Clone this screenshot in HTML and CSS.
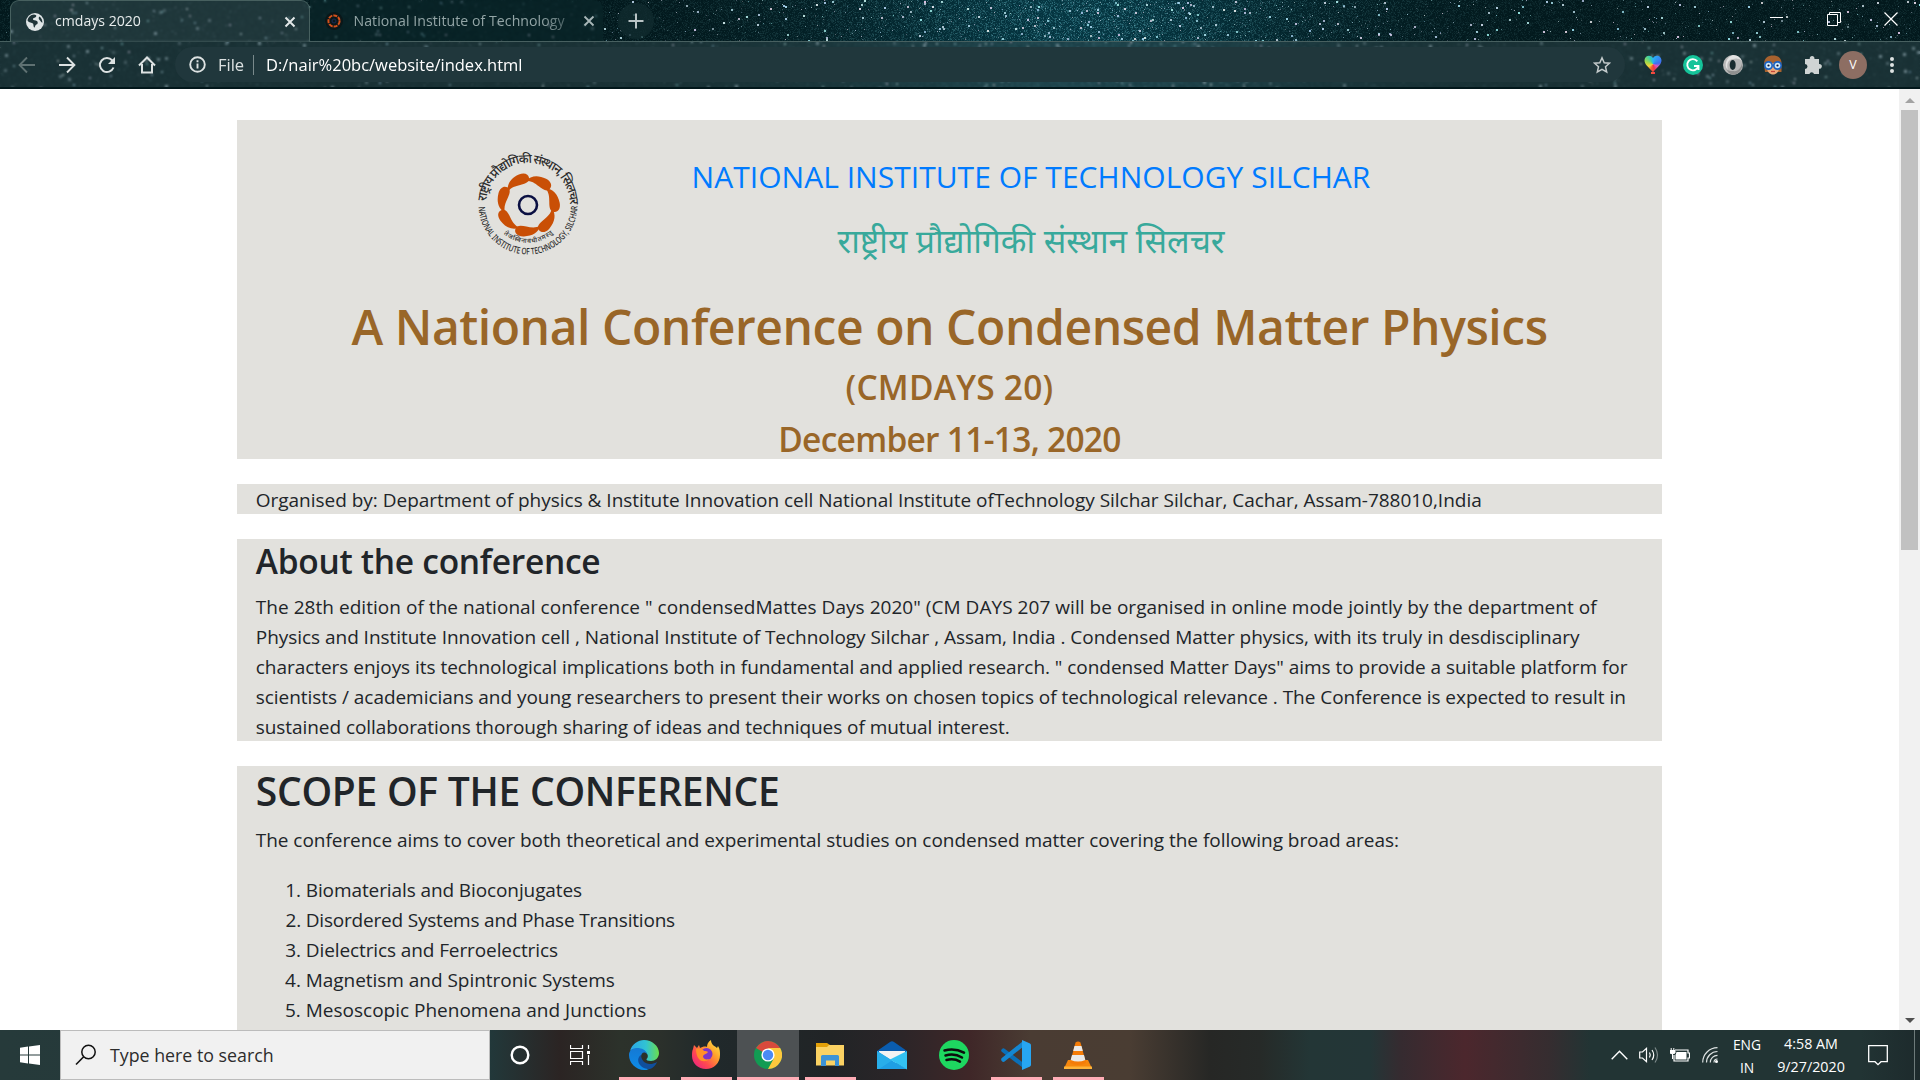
FILE: index.html
```html
<!DOCTYPE html>
<html lang="en">
<head>
<meta charset="utf-8">
<title>cmdays 2020</title>
<link rel="stylesheet" href="styles.css">
</head>
<body>
<header class="chrome">
  <canvas class="sky" width="1920" height="89"></canvas>
  <div class="tabstrip">
    <div class="tab tab-active">
      <svg class="globe" width="20" height="20" viewBox="0 0 20 20"><circle cx="10" cy="10" r="9" fill="#dfe5e6"/><path d="M9 2.500c3 .2 2.600 2 1.500 2.800-1.200.7-2.700.6-2.500 2.200.2 1.200 3.400.4 4.400 1.900.8 1.300.1 2.800-1 3.200-1.300.5-.9 2-2.200 3.200-.9-1-.5-3.200-1.200-4.200C6.900 10.500 4 10.800 2.600 8.800 2.600 5.600 5.500 2.700 9 2.500zM14.500 4.500c2 1.500 3 3.800 2.900 6.200-1.500-.2-1.800-1.800-2.800-2.600-1-1-1.300-2.700-.1-3.600z" fill="#1f3438"/></svg>
      <span class="tab-title">cmdays 2020</span>
      <svg class="close" width="12" height="12" viewBox="0 0 12 12"><path d="M1.500 1.500l9 9m0-9l-9 9" stroke="#e3e8e8" stroke-width="2"/></svg>
    </div>
    <div class="tab tab-idle">
      <svg class="globe" width="20" height="20" viewBox="0 0 20 20"><circle cx="10" cy="10" r="9" fill="#0b1719"/><circle cx="10" cy="10" r="5.600" fill="none" stroke="#d4511b" stroke-width="2" stroke-dasharray="4 1"/><circle cx="10" cy="10" r="2" fill="none" stroke="#172a55"/></svg>
      <span class="tab-title tab-title-idle">National Institute of Technology</span>
      <svg class="close" width="12" height="12" viewBox="0 0 12 12"><path d="M1.500 1.500l9 9m0-9l-9 9" stroke="#a9b7b8" stroke-width="1.800"/></svg>
    </div>
    <div class="new-tab"><svg width="16" height="16" viewBox="0 0 16 16"><path d="M8 .5v15M.5 8h15" stroke="#b9c4c5" stroke-width="2"/></svg></div>
    <div class="window-buttons">
      <svg width="14" height="14" viewBox="0 0 14 14"><path d="M0 5.500h13" stroke="#fff"/></svg>
      <svg width="14" height="14" viewBox="0 0 14 14"><path d="M.5 2.500h10v11H.5zM2.500 2.500v-2h11v10h-3" fill="none" stroke="#fff"/></svg>
      <svg width="14" height="14" viewBox="0 0 14 14"><path d="M.5.5l13 13m0-13l-13 13" stroke="#fff" stroke-width="1.200"/></svg>
    </div>
  </div>
  <div class="toolbar">
    <div class="nav-icons">
      <svg width="18" height="18" viewBox="0 0 18 18"><path d="M17 9H2M9 1.500L1.600 9 9 16.500" fill="none" stroke="#5f7172" stroke-width="1.900"/></svg>
      <svg width="18" height="18" viewBox="0 0 18 18"><path d="M1 9h15M9 1.500L16.400 9 9 16.500" fill="none" stroke="#dde2e2" stroke-width="1.900"/></svg>
      <svg width="18" height="18" viewBox="0 0 18 18"><path d="M15.500 11.500A7 7 0 1 1 14.300 4.500" fill="none" stroke="#dde2e2" stroke-width="2"/><path d="M17 1v7h-7z" fill="#dde2e2"/></svg>
      <svg width="18" height="18" viewBox="0 0 18 18"><path d="M1 9.500L9 1.500l8 8M4 8v8.500h10V8" fill="none" stroke="#dde2e2" stroke-width="2"/></svg>
    </div>
    <div class="omnibox">
      <svg width="17" height="17" viewBox="0 0 17 17"><circle cx="8.500" cy="8.500" r="7.300" fill="none" stroke="#dde2e2" stroke-width="1.900"/><path d="M8.500 7.500v5M8.500 4.300v1.900" stroke="#dde2e2" stroke-width="1.900"/></svg>
      <span class="scheme">File</span>
      <i class="rule"></i>
      <span class="url">D:/nair%20bc/website/index.html</span>
      <svg class="star" width="18" height="18" viewBox="0 0 18 18"><path d="M9 1.800l2.200 4.900 5.300.5-4 3.600 1.200 5.200L9 13.300 4.300 16l1.200-5.200-4-3.600 5.300-.5z" fill="none" stroke="#c4cbcc" stroke-width="1.500"/></svg>
    </div>
    <div class="extensions">
      <div class="heart"></div>
      <svg width="20" height="20" viewBox="0 0 20 20"><circle cx="10" cy="10" r="10" fill="#15c39a"/><path d="M14.300 6.300A5.600 5.600 0 1 0 15.300 11H11M15.500 15v-4" fill="none" stroke="#fff" stroke-width="1.900"/></svg>
      <svg width="20" height="20" viewBox="0 0 20 20"><circle cx="10" cy="10" r="10" fill="#b9b9b9"/><path d="M10 0a10 10 0 0 1 9 6c-3-3-6-3-9-2C5 5 3 9 5 16A10 10 0 0 1 10 0z" fill="#e3e3e3"/><path d="M10 20a10 10 0 0 0 9-12c-1 5-4 9-9 8-3 0-5 0-7-3a10 10 0 0 0 7 7z" fill="#8f9090"/><ellipse cx="9.700" cy="10" rx="3" ry="5" fill="#1a2d30"/></svg>
      <svg width="20" height="20" viewBox="0 0 20 20"><path d="M1 9C1 3 5 .5 10 .5S19 3 18.500 9v8H2z" fill="#a8622f"/><path d="M4 8h12v5c0 4-3 6.500-6 6.500S4 17 4 13z" fill="#eba878"/><circle cx="5.500" cy="10.500" r="4.500" fill="#1a63c4"/><circle cx="14.500" cy="10.500" r="4.500" fill="#1a63c4"/><circle cx="5.500" cy="10.500" r="2.800" fill="#cfe8f8"/><circle cx="14.500" cy="10.500" r="2.800" fill="#cfe8f8"/><circle cx="5.500" cy="10.500" r="1.100" fill="#113"/><circle cx="14.500" cy="10.500" r="1.100" fill="#113"/><path d="M8 16.500h4" stroke="#c1443a" stroke-width="1.200"/></svg>
      <svg width="20" height="20" viewBox="0 0 20 20"><path d="M2 4h4.800a2.400 2.400 0 1 1 4.600 0H16v5a2.400 2.400 0 1 1 0 4.700V19h-5a2.400 2.400 0 0 0-4.600 0H2v-5a2.500 2.500 0 0 0 0-5z" fill="#cfd4d4"/></svg>
      <span class="avatar">V</span>
      <svg width="6" height="20" viewBox="0 0 6 20"><g fill="#dde2e2"><circle cx="3" cy="4" r="2"/><circle cx="3" cy="10" r="2"/><circle cx="3" cy="16" r="2"/></g></svg>
    </div>
  </div>
</header>

<main class="viewport">
  <div class="page">
    <section class="panel banner">
      <div class="masthead">
        <svg class="logo" width="108" height="108" viewBox="-54 -54 108 108">
          <defs>
            <path id="arc-top" d="M-42 0A42 42 0 0 1 42 0"/>
            <path id="arc-bottom" d="M-49.500 0A49.500 49.500 0 0 0 49.500 0"/>
            <path id="arc-motto" d="M-38 0A38 38 0 0 0 38 0"/>
            <path id="petal" d="M-13 5C-11-2-5-6 4-6 10-6 13-2.500 12 1 11 5.500 6 5 1 4-4 3-8 2.500-13 5z"/>
          </defs>
          <g fill="#c94f06">
            <use href="#petal" transform="rotate(-24) translate(0 -25.500)"/>
            <use href="#petal" transform="rotate(27.400) translate(0 -25.500)"/>
            <use href="#petal" transform="rotate(78.800) translate(0 -25.500)"/>
            <use href="#petal" transform="rotate(130.200) translate(0 -25.500)"/>
            <use href="#petal" transform="rotate(181.600) translate(0 -25.500)"/>
            <use href="#petal" transform="rotate(233) translate(0 -25.500)"/>
            <use href="#petal" transform="rotate(284.400) translate(0 -25.500)"/>
          </g>
          <circle r="9" fill="none" stroke="#0a0f42" stroke-width="2.600"/>
          <g class="logo-text">
            <text font-size="12.500"><textPath href="#arc-top" startOffset="2" textLength="128">राष्ट्रीय प्रौद्योगिकी संस्थान, सिलचर</textPath></text>
            <text font-size="9"><textPath href="#arc-bottom" startOffset="2" textLength="152" lengthAdjust="spacingAndGlyphs">NATIONAL INSTITUTE OF TECHNOLOGY, SILCHAR</textPath></text>
            <text font-size="6.500"><textPath href="#arc-motto" startOffset="33" textLength="54">तेजस्विनावधीतमस्तु</textPath></text>
          </g>
        </svg>
        <div class="institute">
          <div class="institute-en">NATIONAL INSTITUTE OF TECHNOLOGY SILCHAR</div>
          <div class="institute-hi" lang="hi">राष्ट्रीय प्रौद्योगिकी संस्थान सिलचर</div>
        </div>
      </div>
      <h1 class="title">A National Conference on Condensed Matter Physics</h1>
      <h2 class="subtitle acronym">(CMDAYS 20)</h2>
      <h2 class="subtitle dates">December 11-13, 2020</h2>
    </section>

    <section class="panel organiser"><p class="t-org">Organised by: Department of physics &amp; Institute Innovation cell National Institute ofTechnology Silchar Silchar, Cachar, Assam-788010,India</p></section>

    <section class="panel about">
      <h3 class="about-heading">About the conference</h3>
      <p>
        <span class="line t-a1">The 28th edition of the national conference " condensedMattes Days 2020" (CM DAYS 207 will be organised in online mode jointly by the department of</span>
        <span class="line t-a2">Physics and Institute Innovation cell , National Institute of Technology Silchar , Assam, India . Condensed Matter physics, with its truly in desdisciplinary</span>
        <span class="line t-a3">characters enjoys its technological implications both in fundamental and applied research. " condensed Matter Days" aims to provide a suitable platform for</span>
        <span class="line t-a3">scientists / academicians and young researchers to present their works on chosen topics of technological relevance . The Conference is expected to result in</span>
        <span class="line t-a5">sustained collaborations thorough sharing of ideas and techniques of mutual interest.</span>
      </p>
    </section>

    <section class="panel scope">
      <h2 class="scope-heading">SCOPE OF THE CONFERENCE</h2>
      <p class="t-a2">The conference aims to cover both theoretical and experimental studies on condensed matter covering the following broad areas:</p>
      <ol>
        <li class="t-l1">Biomaterials and Bioconjugates</li>
        <li class="t-l2">Disordered Systems and Phase Transitions</li>
        <li class="t-l1">Dielectrics and Ferroelectrics</li>
        <li class="t-a2">Magnetism and Spintronic Systems</li>
        <li>Mesoscopic Phenomena and Junctions</li>
      </ol>
    </section>
  </div>
  <div class="scrollbar">
    <i class="arrow arrow-up"></i>
    <i class="thumb"></i>
    <i class="arrow arrow-down"></i>
  </div>
</main>

<footer class="taskbar">
  <div class="start"><svg width="20" height="20" viewBox="0 0 20 20"><path d="M0 2.800L8 1.600V9.500H0zM9 1.500L20 0v9.500H9zM0 10.500h8v7.900L0 17.200zM9 10.500h11V20L9 18.500z" fill="#fff"/></svg></div>
  <div class="search">
    <svg width="22" height="22" viewBox="0 0 22 22"><circle cx="13.500" cy="8" r="6.700" fill="none" stroke="#111" stroke-width="1.500"/><path d="M8.700 12.800L1 20.500" stroke="#111" stroke-width="1.600"/></svg>
    <span>Type here to search</span>
  </div>
  <div class="task"><svg width="20" height="20" viewBox="0 0 20 20"><circle cx="10" cy="10" r="8.300" fill="none" stroke="#fff" stroke-width="2.400"/></svg></div>
  <div class="task taskview"><svg width="20" height="20" viewBox="0 0 20 20"><path d="M.5 0v3.500h12V0M.5 20v-3.500h12V20M.5 6.500h12v7H.5zM18.500 0v4M18.500 10v10" fill="none" stroke="#fff" stroke-width="1.200"/><path d="M17 6h3v3h-3z" fill="#fff"/></svg></div>
  <div class="task open"><svg width="30" height="30" viewBox="0 0 30 30">
    <defs><linearGradient id="e1" x1="0" x2="1"><stop offset="0" stop-color="#2aa5e6"/><stop offset=".55" stop-color="#31c3d3"/><stop offset="1" stop-color="#6bdf4c"/></linearGradient><linearGradient id="e2" x1="0" x2="0" y1="0" y2="1"><stop offset="0" stop-color="#1579d4"/><stop offset="1" stop-color="#0d8be8"/></linearGradient></defs>
    <path d="M1 11C3 4 9 0 15 0c8 0 15 6 15 13 0 5-4 8-8 8-3 0-5-1-4.500-2 2.500-2 1.500-6-2.500-8C10 8 4 8 1 11z" fill="url(#e1)"/>
    <path d="M0 15c0-4 3-7 8-7 5 0 9 2 10 6-3-3-6-1-6 3 0 6 4 11 8 12-2 1-3 1-5 1C7 30 0 23 0 15z" fill="url(#e2)"/>
    <path d="M12 15c-3 2-4 6-1 10 3 4 8 4 10 4 3-1 6-4 7-7 0 0-3 2-7 2-5 0-9-4-9-9z" fill="#104f9c"/></svg></div>
  <div class="task open"><svg width="30" height="30" viewBox="0 0 30 30">
    <defs><linearGradient id="f1" x1="1" x2="0" y1="0" y2="1"><stop offset="0" stop-color="#fff44f"/><stop offset=".35" stop-color="#ffa22b"/><stop offset=".65" stop-color="#ff4a4f"/><stop offset="1" stop-color="#e5178f"/></linearGradient></defs>
    <path d="M2 9l1-4 3 3 2-3 1 3c2-1 5-2 7-1 0-3 1-5 4-7 0 5 4 6 6 8l1-2c2 3 2 6 2 9 0 8-6 14-14 14S1 23 1 16c0-3 0-5 1-7z" fill="url(#f1)"/>
    <circle cx="15.500" cy="14" r="6" fill="#7b35c9"/><path d="M5 9c4-1 7 0 8 2 2 0 3 0 4 1-1 2-4 2-5 4 0 3 3 4 6 3-2 3-8 3-10 0C6 17 5 13 5 9z" fill="#ff9028"/></svg></div>
  <div class="task open current"><svg width="28" height="28" viewBox="0 0 28 28">
    <circle cx="14" cy="14" r="14" fill="#129b53"/><path d="M14 14L2 7A14 14 0 0 1 26.200 7z" fill="#d84a3c"/><path d="M26.200 7A14 14 0 0 1 14 28l6-11-6-10z" fill="#fdc93d"/><circle cx="14" cy="14" r="6.600" fill="#fff"/><circle cx="14" cy="14" r="5.200" fill="#4a8af4"/></svg></div>
  <div class="task open"><svg width="28" height="26" viewBox="0 0 28 26">
    <path d="M0 1h11l3 2v3H0z" fill="#e3a008"/><path d="M0 5h11l2-2h15v20.500H0z" fill="#fbd263"/><path d="M5 24V14.500Q5 13 6.500 13h15Q23 13 23 14.500V24h-4v-5.500h-9V24z" fill="#3d93d6"/></svg></div>
  <div class="task"><svg width="30" height="30" viewBox="0 0 30 30">
    <path d="M0 11L13 2q2-1.500 4 0l13 9v4H0z" fill="#0a5cae"/><path d="M2 11h26v12H2z" fill="#f3f3f3"/><path d="M0 11l15 9.500L30 29H0z" fill="#1f9fe4"/><path d="M30 11v18.500L13 19.500z" fill="#33c2f3"/><path d="M0 11l15 9.500L2 29H0z" fill="#28aeea"/></svg></div>
  <div class="task"><svg width="30" height="30" viewBox="0 0 30 30">
    <circle cx="15" cy="15" r="15" fill="#1ed760"/><path d="M5.500 10.500q10-3 19.500 2.200M6.500 15.500q9-2.500 16.500 2M7.500 20q7.500-2 13.500 1.600" fill="none" stroke="#0c0c0c" stroke-linecap="round" stroke-width="2.500"/></svg></div>
  <div class="task open"><svg width="30" height="30" viewBox="0 0 30 30">
    <path d="M2.500 10.500L22 27" stroke="#0a6fb8" stroke-width="4.500" stroke-linecap="round" transform="matrix(1 0 0 .9 0 1)"/><path d="M2.500 19.500L22 4" stroke="#1487d2" stroke-width="4.500" stroke-linecap="round"/><path d="M21 0l7.500 3.200q1.500.7 1.500 2v19.600q0 1.300-1.500 2L21 30z" fill="#27a6f2"/></svg></div>
  <div class="task open"><svg width="28" height="30" viewBox="0 0 28 30">
    <path d="M4 20h20l4 8.500H0z" fill="#f6870d"/><path d="M11.500 2.500Q14 .5 16.500 2.500L22 23q-8 4-16 0z" fill="#f57c08"/><path d="M10.500 6h7l1.300 5H9.200zM8 15h12l1.300 5q-7 3-14.600 0z" fill="#e9e9e9"/><path d="M0 26.500h28V29H0z" fill="#ffb338"/></svg></div>
  <div class="tray">
    <svg class="chevron" width="17" height="10" viewBox="0 0 17 10"><path d="M.7 9.300l7.800-8 7.800 8" fill="none" stroke="#fff" stroke-width="1.400"/></svg>
    <svg class="volume" width="20" height="18" viewBox="0 0 20 18"><path d="M.7 6v6H3.500L7.500 15.700V2.300L3.500 6zM10.500 6.500q1.500 2.500 0 5M13 4q3.500 5 0 10" fill="none" stroke="#fff" stroke-width="1.200"/><path d="M16 1.500q5 7.500 0 15" fill="none" stroke="#7d898a" stroke-width="1.200"/></svg>
    <svg class="battery" width="20" height="14" viewBox="0 0 20 14"><path d="M5 2h13v3h1.500v5H18v3H4V7" fill="none" stroke="#fff" stroke-width="1.200"/><path d="M6.500 4H16.500v7.500H5.500V7z" fill="#fff"/><path d="M1.200 0v2.500M3.800 0v2.500M0 2.500h5v2.500q-2.500 2-5 0zM2.500 6v5" fill="#fff" stroke="#fff"/></svg>
    <svg class="wifi" width="17" height="16" viewBox="0 0 17 16"><path d="M.7 15.500A14.800 14.800 0 0 1 15.500.7M4.500 15.500a11 11 0 0 1 11-11M8.300 15.500a7.200 7.200 0 0 1 7.200-7.200M12 15.500a3.500 3.500 0 0 1 3.500-3.500" fill="none" stroke="#dfe4e4" stroke-width="1.200"/><circle cx="14.500" cy="14.500" r="1.500" fill="#fff"/></svg>
    <div class="readout lang"><span>ENG</span><span>IN</span></div>
    <div class="readout clock"><span>4:58 AM</span><span>9/27/2020</span></div>
    <svg class="notice" width="20" height="21" viewBox="0 0 20 21"><path d="M.7.7h18.600v16H13l-3 3-3-3H.7z" fill="none" stroke="#fff" stroke-width="1.300"/></svg>
    <i class="peek"></i>
  </div>
</footer>
<script src="sky.js"></script>
</body>
</html>
```
FILE: styles.css
```css
* { box-sizing: border-box; }
body {
  margin: 0;
  width: 1920px;
  height: 1080px;
  overflow: hidden;
  display: flex;
  flex-direction: column;
  background: #fff;
  color: #212529;
  font: 19px/30px "Open Sans", "Noto Sans", sans-serif;
}
svg { display: block; flex: none; }
p, h1, h2, h3, ol { margin: 0; }

/* browser frame */
.chrome { position: relative; height: 89px; flex: none; background: #03191c; overflow: hidden; }
.sky { position: absolute; left: 0; top: 0; }
.tabstrip { position: relative; z-index: 1; display: flex; height: 41px; padding-left: 10px; }
.tab { display: flex; align-items: center; height: 41px; }
.tab-active {
  width: 300px;
  height: 42px;
  padding: 0 13px 0 14px;
  background: rgba(52, 76, 80, .55);
  backdrop-filter: blur(1.3px);
  border: 1px solid #47605f;
  border-bottom: 0;
  border-radius: 9px 9px 0 0;
}
.tab-idle { width: 293px; padding: 0 8px 0 14px; background: rgba(10, 38, 42, .6); backdrop-filter: blur(1.3px); border-radius: 0 9px 0 0; }
.tab-title { margin-left: 10px; font-size: 14.1px; line-height: 20px; color: #e8eded; white-space: nowrap; flex: 1; margin-top: -1px; }
.tab-title-idle { margin-left: 9.500px; letter-spacing: .06px; color: #93a5a6; flex: 0 0 213px; margin-right: auto; margin-top: 0; -webkit-mask: linear-gradient(90deg, #000 88%, rgba(0,0,0,.45)); mask: linear-gradient(90deg, #000 88%, rgba(0,0,0,.45)); }
.new-tab { width: 36px; height: 36px; margin: 3px 0 0 15px; border-radius: 50%; background: rgba(16, 42, 46, .8); display: flex; align-items: center; justify-content: center; }
.window-buttons { display: flex; gap: 43px; margin: 12px 22px 0 auto; }

.toolbar {
  position: relative;
  display: flex;
  align-items: center;
  height: 48px;
  padding: 0 25px 0 18px;
  background: rgba(46, 70, 74, .5);
  backdrop-filter: blur(1.300px);
  border-top: 1px solid #486060;
  border-bottom: 2px solid #02171b;
}
.nav-icons { display: flex; gap: 22px; width: 157px; }
.omnibox { display: flex; align-items: center; width: 1450px; height: 35px; padding: 0 14px 0 14px; border-radius: 18px; background: #20373c; color: #fff; font-size: 16.500px; }
.scheme { margin-left: 12px; color: #dbe1e1; width: 26px; }
.rule { width: 1px; height: 20px; margin: 0 12px 0 9px; background: #79898b; }
.star { margin-left: auto; }
.extensions { display: flex; align-items: center; margin-left: 18px; gap: 20px; flex: 1; }
.extensions .avatar { width: 28px; height: 28px; margin: 0 0 0 -4px; border-radius: 50%; background: #8d6e63; color: #fff; font-size: 12.500px; line-height: 28px; text-align: center; }
.extensions > :last-child { margin-left: 2px; }
.heart {
  width: 20px;
  height: 19px;
  background: conic-gradient(from 0deg at 50% 48%, #29b6f6, #3f6df0 22%, #d858c0 32%, #f0364a 46%, #f0662e 56%, #f6d43c 68%, #a3d94a 80%, #3bd0a8 92%, #29b6f6);
  clip-path: path("M10 3C12-.5 18 0 18.500 5c.2 4.500-4 7-8 11.500V17H12v2H8v-2h1.500v-.5C5.500 12 1.300 9.500 1.500 5 2 0 8-.5 10 3z");
}

/* page */
.viewport { flex: 1; min-height: 0; display: flex; overflow: hidden; }
.page { width: 1899px; padding: 31px 237px 0; display: flex; flex-direction: column; flex: none; }
.panel { background: #e2e1dd; padding: 0 18.750px; white-space: nowrap; margin-bottom: 25px; flex: none; }
.banner { height: 339px; padding: 0; text-align: center; }
.masthead { display: flex; height: 177px; padding: 31px 0 0 237px; }
.institute { width: 680px; margin-left: 109px; padding-top: 8px; }
.institute-en { font-size: 30px; line-height: 36px; letter-spacing: .03px; color: #007bff; }
.institute-hi { margin-top: 24px; font-size: 33.400px; line-height: 42px; color: #38a99b; }
.logo-text { font-family: "Noto Sans", sans-serif; font-weight: 500; fill: #2b2b2b; }
.title, .subtitle { font-weight: 600; color: #996628; }
.title { font-size: 48px; line-height: 60px; letter-spacing: -.445px; }
.subtitle { font-size: 33.500px; line-height: 42px; }
.acronym { margin-top: 9px; letter-spacing: .24px; }
.dates { margin-top: 10px; letter-spacing: -.72px; }
.organiser { height: 30px; }
.organiser p { padding-top: 1px; }
.about { height: 202px; }
.about-heading { font-size: 33.500px; line-height: 42px; font-weight: 600; letter-spacing: -.27px; padding-top: 1px; margin-bottom: 10px; }
.line { display: block; }
.scope { height: 400px; }
.scope-heading { font-size: 39px; line-height: 48px; font-weight: 600; letter-spacing: -.26px; padding-top: 1px; margin-bottom: 10px; }
.scope ol { margin-top: 20px; padding-left: 50px; }
.t-org { letter-spacing: -.018px; }
.t-a1 { letter-spacing: .041px; }
.t-a2 { letter-spacing: -.037px; }
.t-a3 { letter-spacing: -.039px; }
.t-a5 { letter-spacing: -.064px; }
.t-l1 { letter-spacing: -.1px; }
.t-l2 { letter-spacing: -.2px; }

.scrollbar { width: 21px; background: #f1f1f1; display: flex; flex-direction: column; align-items: center; }
.thumb { width: 17px; height: 440px; margin-top: 7px; background: #c1c1c1; }
.arrow { border: 5px solid transparent; width: 0; height: 0; }
.arrow-up { border-top: 0; border-bottom-color: #a3a3a3; margin-top: 9px; }
.arrow-down { border-bottom: 0; border-top-color: #505050; margin: auto 0 7px; }

/* taskbar */
.taskbar {
  flex: none;
  height: 50px;
  display: flex;
  color: #fff;
  background: linear-gradient(90deg, #263a3a 0, #22383a 490px, #2b2423 560px, #2c322b 620px, #2b302b 660px, #20292b 710px, #212426 830px, #2b2528 900px, #3f2728 970px, #4a3c33 1030px, #4a3d33 1130px, #262725 1210px, #262a28 1260px, #233636 1310px, #233637 1370px, #352b30 1400px, #4c272d 1465px, #352d30 1550px, #223434 1590px, #223434 1860px, #1d2a2c 1920px);
}
.start { width: 60px; display: flex; align-items: center; padding-left: 20px; }
.search { width: 430px; display: flex; align-items: center; padding-left: 14px; background: #f1f1f1; border: 1px solid #bcbcbc; color: #2c2c2c; font-size: 17.800px; }
.search span { margin-left: 13px; }
.task { width: 62px; display: flex; align-items: center; justify-content: center; }
.search + .task { width: 60px; }
.taskview { width: 63px; padding-right: 3px; }
.open { background: linear-gradient(#ffadb6, #ffadb6) center bottom / 51px 3px no-repeat; }
.current { background: linear-gradient(#ffadb6, #ffadb6) center bottom / 100% 3px no-repeat, #4d5153; }
.tray { display: flex; align-items: center; margin-left: auto; font-size: 14.300px; line-height: 23px; }
.volume { margin-left: 11px; }
.battery { margin-left: 11px; }
.wifi { margin-left: 12px; }
.readout { display: flex; flex-direction: column; align-items: center; }
.lang { width: 28px; margin-left: 14px; font-size: 13.800px; padding-top: 1px; }
.clock { width: 70px; margin-left: 15px; }
.notice { margin-left: 22px; }
.peek { width: 1px; height: 50px; margin: 0 5px 0 26px; background: #6d7a7a; }
```
FILE: sky.js
```js
// Starfield behind the tab strip and toolbar.
const canvas = document.querySelector('.sky');
const ctx = canvas.getContext('2d');
const { width, height } = canvas;

let seed = 20200927;
const random = () => {
  seed = (seed * 1664525 + 1013904223) >>> 0;
  return seed / 4294967296;
};

// Brightness of the milky band at a given x.
const band = x => Math.exp(-(((x - 1080) / 230) ** 2));

const image = ctx.createImageData(width, height);
for (let y = 0; y < height; y++) {
  for (let x = 0; x < width; x++) {
    const b = band(x);
    const n = random() ** 3 * (22 + 40 * b);
    const i = (y * width + x) * 4;
    image.data[i] = 2 + 2 * b + n * 0.7;
    image.data[i + 1] = 24 + 28 * b + n;
    image.data[i + 2] = 28 + 36 * b + n;
    image.data[i + 3] = 255;
  }
}
ctx.putImageData(image, 0, 0);

for (let k = 0; k < 6500; k++) {
  const x = random() * width;
  const y = random() * height;
  const pick = random();
  if (pick > 0.32 + 0.6 * band(x)) continue;
  const strength = random() ** 1.8;
  const size = strength > 0.72 ? 2 : 1;
  ctx.fillStyle = `rgba(${150 + random() * 90 | 0}, ${200 + random() * 40 | 0}, 235, ${0.2 + strength * 0.75})`;
  ctx.fillRect(x | 0, y | 0, size, size);
}

// Larger stars that stay visible through the frosted toolbar.
for (let k = 0; k < 170; k++) {
  ctx.fillStyle = `rgba(205, 228, 240, ${0.35 + random() * 0.5})`;
  const y = random() < 0.8 ? 42 + random() * 45 : random() * 40;
  const x = random() * width;
  const r = y > 41 || x < 600 ? 3 : 2;
  ctx.fillRect(x | 0, y | 0, r, r);
}
```
